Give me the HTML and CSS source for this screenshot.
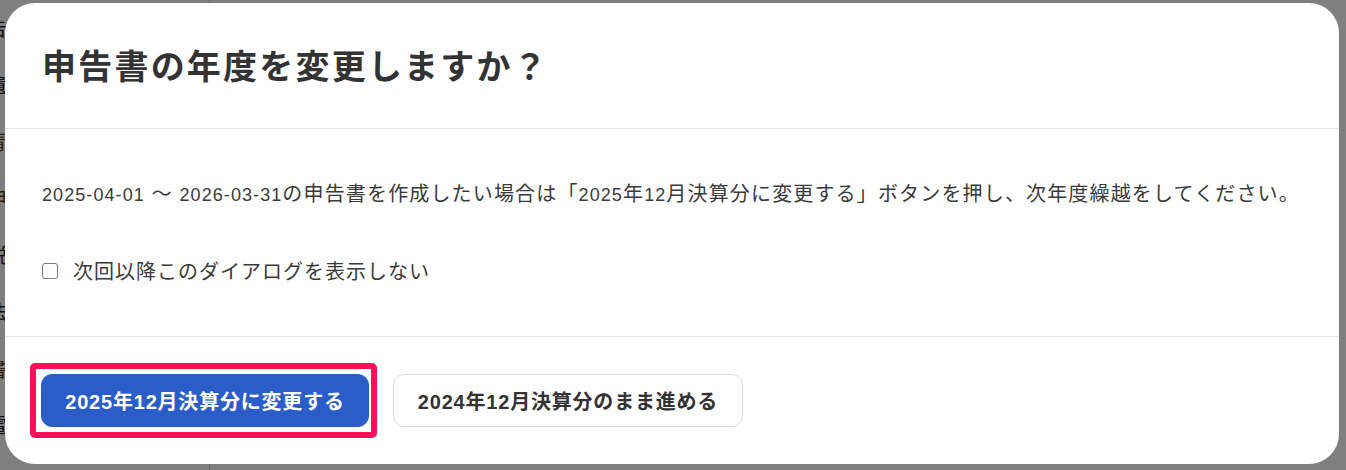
FILE: index.html
```html
<!DOCTYPE html>
<html lang="ja">
<head>
<meta charset="utf-8">
<title>申告書の年度を変更しますか？</title>
<link rel="stylesheet" href="styles.css">
</head>
<body>
<div class="page">
  <aside class="sidebar">
    <div class="nav-item">告</div>
    <div class="nav-item">遺</div>
    <div class="nav-item accent">青</div>
    <div class="nav-item accent">申</div>
    <div class="nav-item">税</div>
    <div class="nav-item">法</div>
    <div class="nav-item accent">書</div>
    <div class="nav-item">電</div>
  </aside>
  <main class="content"></main>
</div>
<div class="overlay">
  <div class="modal" role="dialog" aria-labelledby="dlg-title">
    <header class="modal-header">
      <h1 id="dlg-title" class="modal-title">申告書の年度を変更しますか？</h1>
    </header>
    <section class="modal-body">
      <p class="message"><span class="num">2025-04-01</span> ～ <span class="num">2026-03-31</span>の申告書を作成したい場合は「<span class="num">2025</span>年<span class="num">12</span>月決算分に変更する」ボタンを押し、次年度繰越をしてください。</p>
      <label class="check-row">
        <input type="checkbox" class="check">
        <span class="check-label">次回以降このダイアログを表示しない</span>
      </label>
    </section>
    <footer class="modal-footer">
      <div class="highlight-wrap">
        <button class="btn btn-primary">2025年12月決算分に変更する</button>
        <span class="highlight"></span>
      </div>
      <button class="btn btn-secondary">2024年12月決算分のまま進める</button>
    </footer>
  </div>
</div>
</body>
</html>
```

FILE: styles.css
```css
* { box-sizing: border-box; }
html, body { margin: 0; padding: 0; }
body {
  width: 1346px;
  height: 470px;
  overflow: hidden;
  background: #ffffff;
  font-family: "Liberation Sans", "Noto Sans CJK JP", sans-serif;
  color: #333333;
}
.page {
  display: flex;
  height: 470px;
}
.sidebar {
  width: 210px;
  border-right: 1px solid #d0d0d0;
  padding-top: 16px;
  display: flex;
  flex-direction: column;
}
.nav-item {
  height: 60.5px;
  margin-left: -13px;
  font-size: 20px;
  line-height: 24px;
  color: #222222;
  font-family: "Noto Sans CJK JP", sans-serif;
}
.nav-item.accent { color: #5a3a10; }
.content { flex: 1; }

.overlay {
  position: fixed;
  inset: 0;
  background: rgba(0, 0, 0, 0.5);
}
.modal {
  position: absolute;
  left: 5px;
  top: 3px;
  width: 1334px;
  height: 461px;
  background: #ffffff;
  border-radius: 30px;
  display: flex;
  flex-direction: column;
}
.modal-header {
  height: 126px;
  display: flex;
  align-items: center;
  padding: 0 37px;
  border-bottom: 1px solid #e6e6e6;
}
.modal-title {
  margin: 0;
  font-family: "Noto Sans CJK JP", sans-serif;
  font-size: 34px;
  font-weight: 700;
  letter-spacing: 0.065em;
  color: #333333;
  line-height: 1.2;
}
.modal-body {
  padding: 52px 37px 0;
  height: 208px;
  border-bottom: 1px solid #e6e6e6;
  display: flex;
  flex-direction: column;
  gap: 48px;
}
.message {
  margin: 0;
  font-family: "Liberation Sans", "Noto Sans CJK JP", sans-serif;
  font-size: 20px;
  line-height: 27px;
  letter-spacing: 0.058em;
  color: #3a3a3a;
}
.num {
  font-size: 18px;
  letter-spacing: 0.06em;
}
.check-row {
  display: flex;
  align-items: center;
  gap: 15px;
  height: 27px;
  font-size: 20px;
  letter-spacing: 0.05em;
  color: #3a3a3a;
}
.check {
  appearance: none;
  -webkit-appearance: none;
  margin: 0;
  width: 16px;
  height: 16px;
  border: 1.5px solid #7a7a7a;
  border-radius: 3px;
  background: #ffffff;
}
.modal-footer {
  flex: 1;
  display: flex;
  align-items: center;
  gap: 24px;
  padding: 0 37px 0 36px;
}
.highlight-wrap {
  position: relative;
  display: flex;
}
.highlight {
  position: absolute;
  left: -11px;
  right: -8px;
  top: -11px;
  bottom: -11px;
  border: 6px solid #ff0f5a;
  border-radius: 5px;
  pointer-events: none;
}
.btn {
  height: 53px;
  padding: 0;
  border-radius: 11px;
  font-family: "Liberation Sans", "Noto Sans CJK JP", sans-serif;
  font-size: 20px;
  font-weight: 700;
  letter-spacing: 0.04em;
  cursor: pointer;
}
.btn-primary {
  width: 328px;
  background: #2b5dc9;
  border: 1px solid #2b5dc9;
  color: #ffffff;
}
.btn-secondary {
  width: 350px;
  background: #ffffff;
  border: 1px solid #dcdcdc;
  color: #333333;
}
```
